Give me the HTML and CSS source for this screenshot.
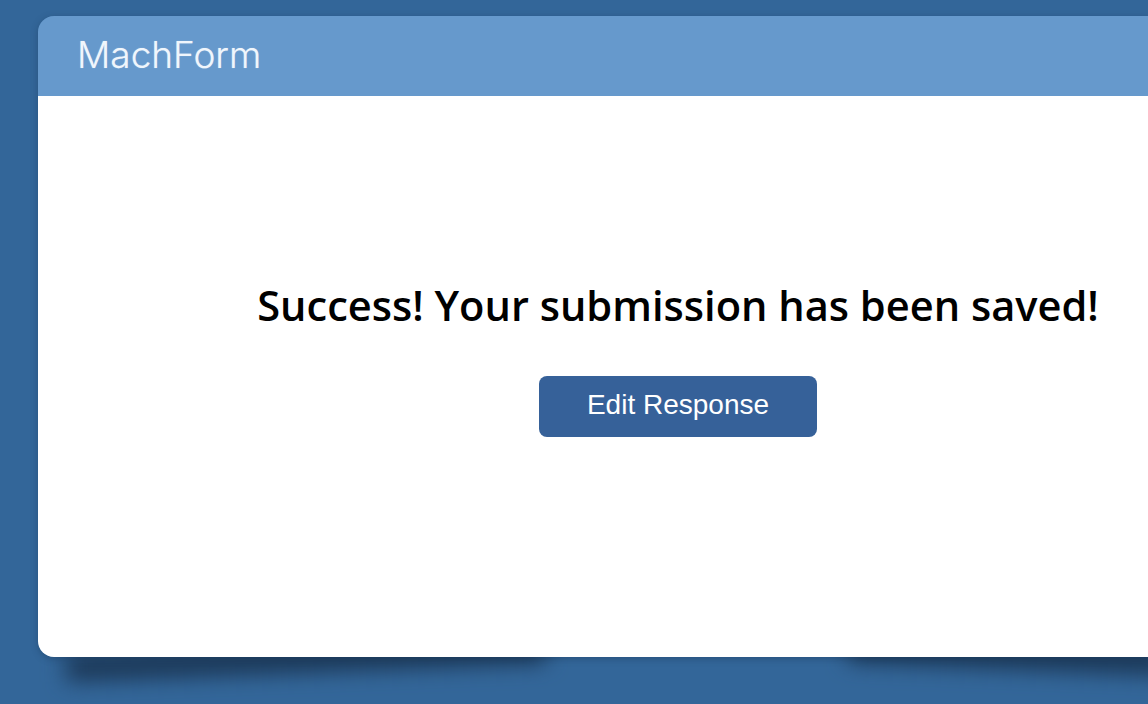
FILE: index.html
```html
<!DOCTYPE html>
<html lang="en">
<head>
<meta charset="utf-8">
<title>MachForm</title>
<link rel="stylesheet" href="styles.css">
</head>
<body>
<main class="card">
  <header class="card-header"><span class="logo">MachForm</span></header>
  <section class="card-body">
    <h1 class="message">Success! Your submission has been saved!</h1>
    <a class="button" href="#">Edit Response</a>
  </section>
</main>
</body>
</html>
```

FILE: styles.css
```css
html, body {
  margin: 0;
  height: 100%;
}
body {
  background: #336699;
  overflow: hidden;
  padding: 16px 0 0 38px;
  box-sizing: border-box;
}
.card {
  position: relative;
  height: 641px;
  display: flex;
  flex-direction: column;
  border-radius: 16px 0 0 16px;
  box-shadow: 0 2px 7px rgba(20, 45, 75, 0.35);
}
.card::before,
.card::after {
  content: "";
  position: absolute;
  z-index: -1;
  height: 26px;
  background: #1a3553;
  filter: blur(11px);
}
.card::before {
  left: 28px;
  bottom: -24px;
  width: 480px;
  transform: rotate(-2.2deg);
  transform-origin: left center;
}
.card::after {
  right: -20px;
  bottom: -18px;
  width: 320px;
  transform: rotate(2.4deg);
  transform-origin: right center;
}
.card-header {
  height: 80px;
  flex: none;
  background: #6699cc;
  border-radius: 16px 0 0 0;
  display: flex;
  align-items: center;
  padding-left: 39px;
  box-sizing: border-box;
}
.logo {
  font-family: "Inter", sans-serif;
  font-weight: 300;
  font-size: 37px;
  line-height: 1;
  color: #f0f6fc;
  text-shadow: 0 0 1px rgba(255, 255, 255, 0.5);
  position: relative;
  top: -2px;
}
.card-body {
  flex: 1;
  background: #fff;
  border-radius: 0 0 0 16px;
  display: flex;
  flex-direction: column;
  align-items: center;
  padding: 181px 0 0 170px;
  box-sizing: border-box;
}
.message {
  margin: 0;
  font-family: "Open Sans", sans-serif;
  font-weight: 600;
  font-size: 41.6px;
  line-height: 56px;
  color: #000;
}
.button {
  margin-top: 43px;
  width: 278px;
  height: 61px;
  border-radius: 8px;
  background: #366199;
  color: #fff;
  font-family: "Liberation Sans", Arial, sans-serif;
  font-size: 28px;
  line-height: 58px;
  text-align: center;
  text-decoration: none;
}
```
